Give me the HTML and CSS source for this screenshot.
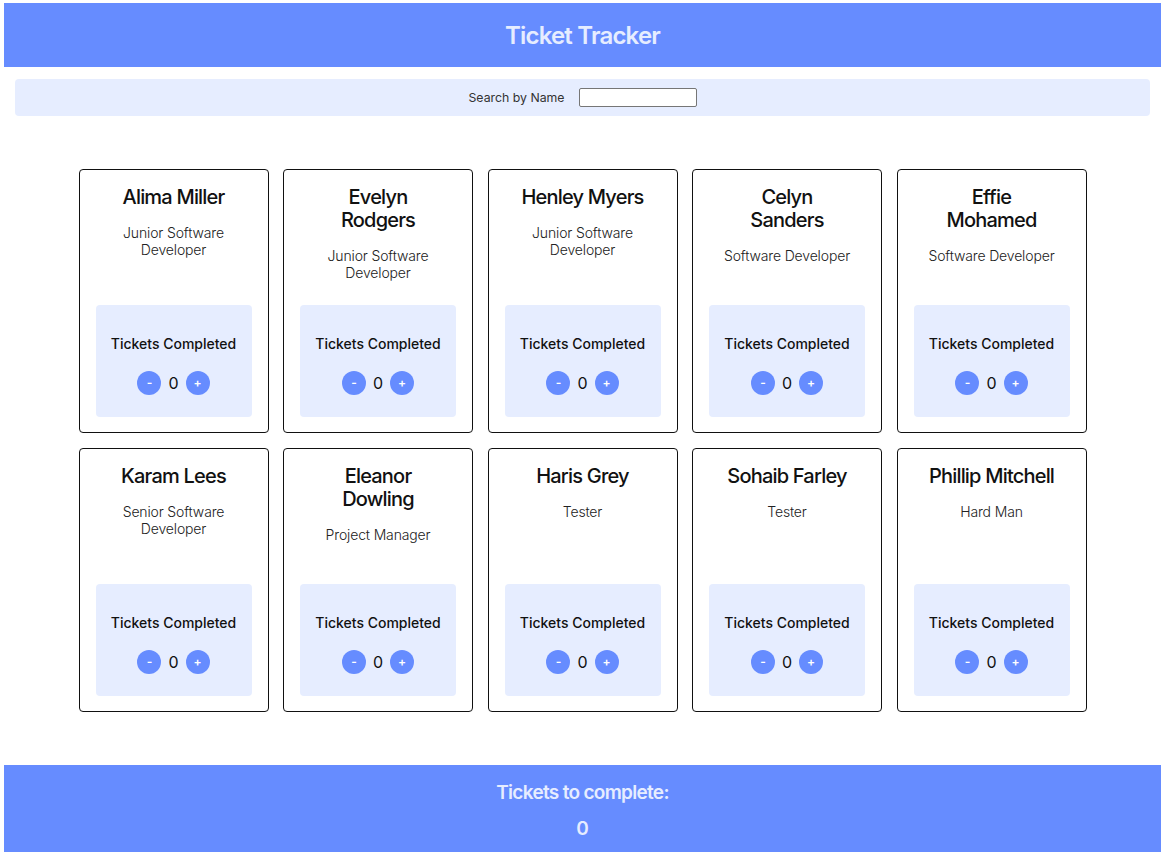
FILE: index.html
```html
<!DOCTYPE html>
<html lang="en">
<head>
<meta charset="utf-8">
<title>Ticket Tracker</title>
<link rel="stylesheet" href="styles.css">
</head>
<body>
<header class="header"><h1 class="title">Ticket Tracker</h1></header>
<div class="search">
  <label class="search-label" for="search">Search by Name</label>
  <input class="search-input" id="search" type="text">
</div>
<main class="grid">
  <div class="card"><div class="card-top"><h2 class="name">Alima Miller</h2><p class="role">Junior Software Developer</p></div>
    <div class="panel"><h3 class="panel-title">Tickets Completed</h3><div class="counter"><button class="btn">-</button><span class="count">0</span><button class="btn">+</button></div></div></div>
  <div class="card"><div class="card-top"><h2 class="name">Evelyn<br>Rodgers</h2><p class="role">Junior Software Developer</p></div>
    <div class="panel"><h3 class="panel-title">Tickets Completed</h3><div class="counter"><button class="btn">-</button><span class="count">0</span><button class="btn">+</button></div></div></div>
  <div class="card"><div class="card-top"><h2 class="name">Henley Myers</h2><p class="role">Junior Software Developer</p></div>
    <div class="panel"><h3 class="panel-title">Tickets Completed</h3><div class="counter"><button class="btn">-</button><span class="count">0</span><button class="btn">+</button></div></div></div>
  <div class="card"><div class="card-top"><h2 class="name">Celyn<br>Sanders</h2><p class="role">Software Developer</p></div>
    <div class="panel"><h3 class="panel-title">Tickets Completed</h3><div class="counter"><button class="btn">-</button><span class="count">0</span><button class="btn">+</button></div></div></div>
  <div class="card"><div class="card-top"><h2 class="name">Effie<br>Mohamed</h2><p class="role">Software Developer</p></div>
    <div class="panel"><h3 class="panel-title">Tickets Completed</h3><div class="counter"><button class="btn">-</button><span class="count">0</span><button class="btn">+</button></div></div></div>
  <div class="card"><div class="card-top"><h2 class="name">Karam Lees</h2><p class="role">Senior Software Developer</p></div>
    <div class="panel"><h3 class="panel-title">Tickets Completed</h3><div class="counter"><button class="btn">-</button><span class="count">0</span><button class="btn">+</button></div></div></div>
  <div class="card"><div class="card-top"><h2 class="name">Eleanor<br>Dowling</h2><p class="role">Project Manager</p></div>
    <div class="panel"><h3 class="panel-title">Tickets Completed</h3><div class="counter"><button class="btn">-</button><span class="count">0</span><button class="btn">+</button></div></div></div>
  <div class="card"><div class="card-top"><h2 class="name">Haris Grey</h2><p class="role">Tester</p></div>
    <div class="panel"><h3 class="panel-title">Tickets Completed</h3><div class="counter"><button class="btn">-</button><span class="count">0</span><button class="btn">+</button></div></div></div>
  <div class="card"><div class="card-top"><h2 class="name">Sohaib Farley</h2><p class="role">Tester</p></div>
    <div class="panel"><h3 class="panel-title">Tickets Completed</h3><div class="counter"><button class="btn">-</button><span class="count">0</span><button class="btn">+</button></div></div></div>
  <div class="card"><div class="card-top"><h2 class="name">Phillip Mitchell</h2><p class="role">Hard Man</p></div>
    <div class="panel"><h3 class="panel-title">Tickets Completed</h3><div class="counter"><button class="btn">-</button><span class="count">0</span><button class="btn">+</button></div></div></div>
</main>
<footer class="footer">
  <h2 class="footer-title">Tickets to complete:</h2>
  <p class="footer-count">0</p>
</footer>
</body>
</html>
```
FILE: styles.css
```css
* { box-sizing: border-box; }
body {
  margin: 3px 4px 7px;
  font-family: Inter, "Noto Sans", sans-serif;
  color: #111;
  background: #fff;
}
.header {
  background: #668cff;
  height: 64px;
  display: flex;
  align-items: center;
  justify-content: center;
}
.title {
  margin: 0;
  font-size: 24px;
  font-weight: 600;
  color: #e6edff;
  letter-spacing: -0.8px;
}
.search {
  margin: 12px 11px 0;
  height: 37px;
  background: #e6edff;
  border-radius: 4px;
  display: flex;
  align-items: center;
  justify-content: center;
  gap: 14px;
}
.search-label {
  font-size: 12.3px;
  color: #333;
}
.search-input {
  width: 118px;
  height: 19px;
  border: 1px solid #767676;
  border-radius: 2px;
  padding: 0 3px;
  background: #fff;
}
.grid {
  margin-top: 53px;
  display: grid;
  grid-template-columns: repeat(5, 190px);
  column-gap: 14.5px;
  row-gap: 15px;
  justify-content: center;
}
.card {
  height: 264px;
  border: 1px solid #111;
  border-radius: 4px;
  padding: 16px 16px 15px;
  display: flex;
  flex-direction: column;
  justify-content: space-between;
  text-align: center;
}
.name {
  margin: 0;
  font-size: 20px;
  line-height: 23px;
  font-weight: 500;
  color: #111;
  letter-spacing: -0.8px;
}
.role {
  margin: 16px 0 0;
  font-size: 14px;
  line-height: 16.5px;
  font-weight: 300;
  color: #222;
  letter-spacing: -0.15px;
}
.panel {
  height: 112px;
  background: #e6edff;
  border-radius: 4px;
  padding-top: 30px;
}
.panel-title {
  margin: 0;
  font-size: 14px;
  line-height: 17px;
  font-weight: 500;
  color: #111;
}
.counter {
  margin-top: 19px;
  display: flex;
  align-items: center;
  justify-content: center;
  gap: 7px;
}
.btn {
  width: 24px;
  height: 24px;
  border-radius: 50%;
  border: none;
  background: #668cff;
  color: #fff;
  font-family: Inter, sans-serif;
  font-size: 12px;
  font-weight: 600;
  padding: 0;
  line-height: 24px;
}
.count {
  font-size: 16px;
  font-weight: 400;
  min-width: 10px;
}
.footer {
  margin-top: 53px;
  height: 87px;
  background: #668cff;
  text-align: center;
  color: #e6edff;
  padding-top: 16px;
}
.footer-title {
  margin: 0;
  font-size: 19px;
  line-height: 23px;
  font-weight: 600;
  letter-spacing: -0.7px;
}
.footer-count {
  margin: 13px 0 0;
  font-size: 19px;
  line-height: 23px;
  font-weight: 600;
}
```
